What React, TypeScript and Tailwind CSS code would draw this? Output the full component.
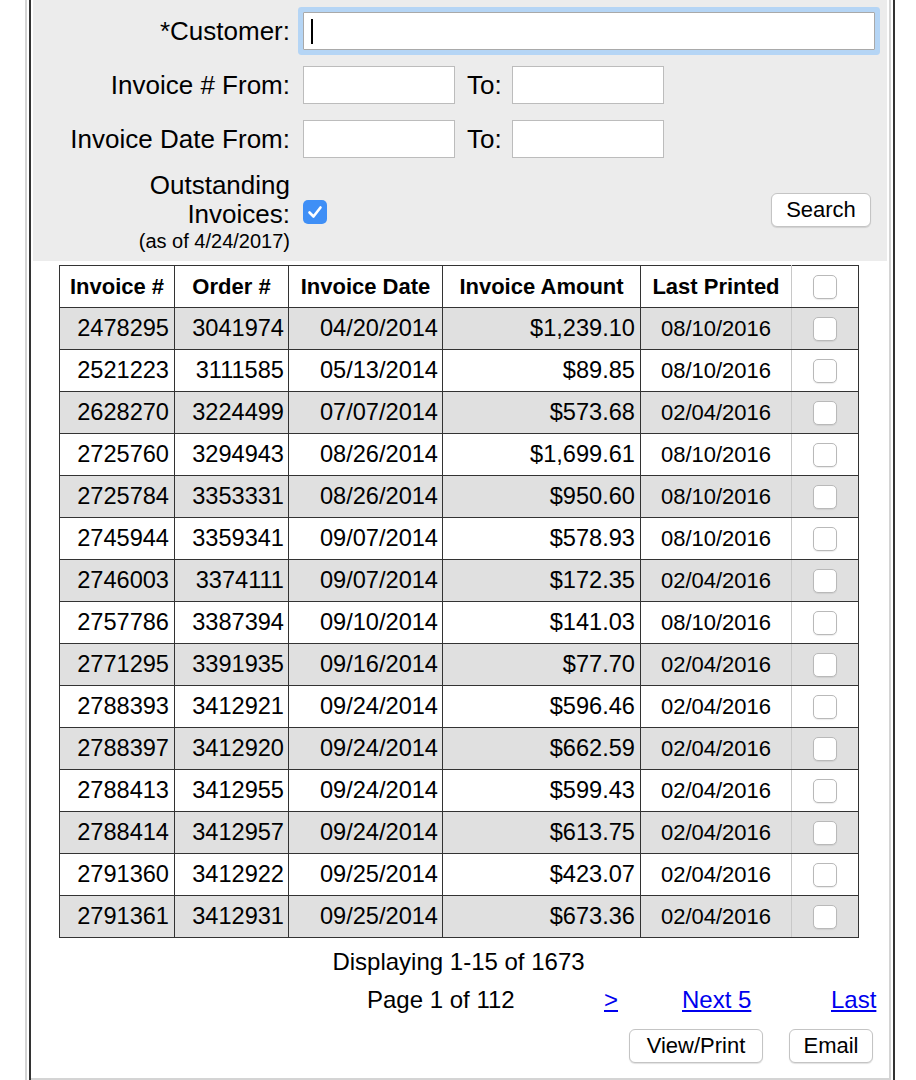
import React from "react";

const rows: [string, string, string, string, string][] = [
  ["2478295", "3041974", "04/20/2014", "$1,239.10", "08/10/2016"],
  ["2521223", "3111585", "05/13/2014", "$89.85", "08/10/2016"],
  ["2628270", "3224499", "07/07/2014", "$573.68", "02/04/2016"],
  ["2725760", "3294943", "08/26/2014", "$1,699.61", "08/10/2016"],
  ["2725784", "3353331", "08/26/2014", "$950.60", "08/10/2016"],
  ["2745944", "3359341", "09/07/2014", "$578.93", "08/10/2016"],
  ["2746003", "3374111", "09/07/2014", "$172.35", "02/04/2016"],
  ["2757786", "3387394", "09/10/2014", "$141.03", "08/10/2016"],
  ["2771295", "3391935", "09/16/2014", "$77.70", "02/04/2016"],
  ["2788393", "3412921", "09/24/2014", "$596.46", "02/04/2016"],
  ["2788397", "3412920", "09/24/2014", "$662.59", "02/04/2016"],
  ["2788413", "3412955", "09/24/2014", "$599.43", "02/04/2016"],
  ["2788414", "3412957", "09/24/2014", "$613.75", "02/04/2016"],
  ["2791360", "3412922", "09/25/2014", "$423.07", "02/04/2016"],
  ["2791361", "3412931", "09/25/2014", "$673.36", "02/04/2016"],
];

function Box() {
  return (
    <span className="inline-block w-[24px] h-[24px] rounded-[5px] border border-[#b9b9b9] bg-white shadow-[0_1px_1px_rgba(0,0,0,0.08)] align-middle" />
  );
}

function TextBox() {
  return <div className="shrink-0 w-[152px] h-[38px] border border-[#bcbcbc] bg-white" />;
}

export default function App() {
  const cell = "border border-[#333]";
  return (
    <div className="min-h-[1080px] bg-white text-black font-['Liberation_Sans',Arial,Helvetica,sans-serif]">
      <div className="ml-[25px] w-[870px] min-h-[1080px] border-l-2 border-[#d4d4d4] pl-[2px]">
        <div className="min-h-[1080px] border-x-2 border-[#333]">
          <div className="mr-[2px] min-h-[1080px] border-r-2 border-b-2 border-[#d4d4d4]">
            {/* Filter panel */}
            <div className="mx-[2px] bg-[#ececec] pt-[12px] pb-[8px]">
              {/* Customer */}
              <div className="flex items-center h-[38px]">
                <div className="shrink-0 w-[257px] text-right text-[26px] leading-[30px]">*Customer:</div>
                <div className="shrink-0 ml-[13px] w-[572px] h-[38px] border border-[#a9a9a9] bg-white rounded-[1px] shadow-[0_0_0_5px_#b5d5f5] flex items-center">
                  <span className="ml-[7px] w-[2px] h-[25px] bg-black" />
                </div>
              </div>
              {/* Invoice # */}
              <div className="flex items-center h-[38px] mt-[16px]">
                <div className="shrink-0 w-[257px] text-right text-[26px] leading-[30px]">Invoice # From:</div>
                <div className="ml-[13px]">
                  <TextBox />
                </div>
                <div className="shrink-0 ml-[12px] w-[45px] text-[26px] leading-[30px]">To:</div>
                <TextBox />
              </div>
              {/* Invoice Date */}
              <div className="flex items-center h-[38px] mt-[16px]">
                <div className="shrink-0 w-[257px] text-right text-[26px] leading-[30px]">Invoice Date From:</div>
                <div className="ml-[13px]">
                  <TextBox />
                </div>
                <div className="shrink-0 ml-[12px] w-[45px] text-[26px] leading-[30px]">To:</div>
                <TextBox />
              </div>
              {/* Outstanding */}
              <div className="flex items-start mt-[13px]">
                <div className="shrink-0 w-[257px] text-right">
                  <div className="text-[26px] leading-[29px]">Outstanding</div>
                  <div className="text-[26px] leading-[29px]">Invoices:</div>
                  <div className="text-[20px] leading-[24px]">(as of 4/24/2017)</div>
                </div>
                <div className="shrink-0 ml-[13px] mt-[29px] w-[24px] h-[24px] rounded-[5px] bg-[#3f8ff6] flex items-center justify-center">
                  <svg width="24" height="24" viewBox="0 0 24 24" fill="none">
                    <polyline
                      points="6.5,12.5 10.5,16.5 17.5,7.5"
                      stroke="white"
                      strokeWidth="2.6"
                      strokeLinecap="round"
                      strokeLinejoin="round"
                    />
                  </svg>
                </div>
                <button className="shrink-0 ml-auto mr-[16px] mt-[22px] w-[100px] h-[34px] rounded-[6px] border border-[#c4c4c4] bg-white text-[22px] leading-none shadow-[0_1px_1px_rgba(0,0,0,0.12)]">
                  Search
                </button>
              </div>
            </div>

            {/* Table */}
            <div className="ml-[28px] w-[799px] mt-[4px]">
              <table className="w-[799px] table-fixed border-collapse">
                <colgroup>
                  <col className="w-[115px]" />
                  <col className="w-[114px]" />
                  <col className="w-[154px]" />
                  <col className="w-[198px]" />
                  <col className="w-[151px]" />
                  <col className="w-[67px]" />
                </colgroup>
                <thead>
                  <tr className="h-[42px] bg-white">
                    <th className={`${cell} text-[22px] font-bold text-center`}>Invoice #</th>
                    <th className={`${cell} text-[22px] font-bold text-center`}>Order #</th>
                    <th className={`${cell} text-[22px] font-bold text-center`}>Invoice Date</th>
                    <th className={`${cell} text-[22px] font-bold text-center`}>Invoice Amount</th>
                    <th className={`${cell} border-r-[#c8c8c8] text-[22px] font-bold text-center`}>Last Printed</th>
                    <th className={`${cell} border-l-[#c8c8c8] text-center`}>
                      <Box />
                    </th>
                  </tr>
                </thead>
                <tbody>
                  {rows.map((r, i) => (
                    <tr key={r[0]} className={`h-[42px] ${i % 2 === 0 ? "bg-[#e0e0e0]" : "bg-white"}`}>
                      <td className={`${cell} text-right pr-[5px] text-[23.6px] leading-none`}>{r[0]}</td>
                      <td className={`${cell} text-right pr-[4px] text-[23.6px] leading-none`}>{r[1]}</td>
                      <td className={`${cell} text-right pr-[4px] text-[23.6px] leading-none`}>{r[2]}</td>
                      <td className={`${cell} text-right pr-[5px] text-[23.6px] leading-none`}>{r[3]}</td>
                      <td className={`${cell} border-r-[#c8c8c8] text-center text-[22px] leading-none`}>{r[4]}</td>
                      <td className={`${cell} border-l-[#c8c8c8] text-center`}>
                        <Box />
                      </td>
                    </tr>
                  ))}
                </tbody>
              </table>
              <div className="mt-[10px] text-center text-[24px] leading-[28px]">Displaying 1-15 of 1673</div>
            </div>

            {/* Pager */}
            <div className="mt-[10px] flex items-center text-[24px] leading-[28px]">
              <div className="ml-[336px] w-[237px]">Page 1 of 112</div>
              <div className="w-[78px]">
                <a href="#" className="text-[#0000ee] underline">&gt;</a>
              </div>
              <div className="w-[149px]">
                <a href="#" className="text-[#0000ee] underline">Next 5</a>
              </div>
              <div>
                <a href="#" className="text-[#0000ee] underline">Last</a>
              </div>
            </div>

            {/* Buttons */}
            <div className="mt-[15px] flex justify-end gap-[26px] pr-[16px]">
              <button className="w-[134px] h-[34px] rounded-[6px] border border-[#c4c4c4] bg-white text-[22px] leading-none shadow-[0_1px_1px_rgba(0,0,0,0.12)]">
                View/Print
              </button>
              <button className="w-[84px] h-[34px] rounded-[6px] border border-[#c4c4c4] bg-white text-[22px] leading-none shadow-[0_1px_1px_rgba(0,0,0,0.12)]">
                Email
              </button>
            </div>
          </div>
        </div>
      </div>
    </div>
  );
}
